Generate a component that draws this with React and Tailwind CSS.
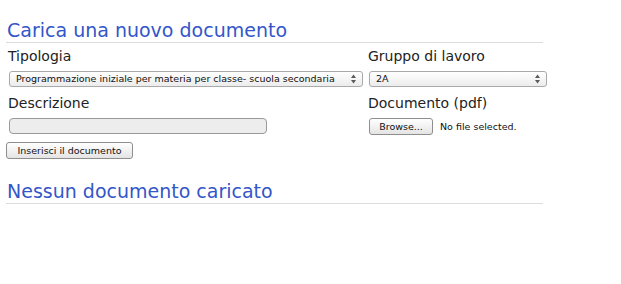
import React from 'react';

function Arrows() {
  return (
    <svg width="7" height="12" viewBox="0 0 7 12" className="shrink-0">
      <path d="M3.5 1.5 L6 5 L1 5 Z" fill="#5a5a5a" />
      <path d="M3.5 10.5 L6 7 L1 7 Z" fill="#5a5a5a" />
    </svg>
  );
}

function FakeSelect({ value, width }) {
  return (
    <div
      className={`${width} h-[16px] flex items-center justify-between pl-[6px] pr-[5px] border border-[#a9a9a9] rounded-[3px] bg-gradient-to-b from-white to-[#ececec] text-[9.5px] leading-none text-[#111]`}
    >
      <span className="whitespace-nowrap">{value}</span>
      <Arrows />
    </div>
  );
}

function Btn({ children, width }) {
  return (
    <div
      className={`${width} h-[17px] flex items-center justify-center border border-[#8e8e8e] rounded-[3px] bg-gradient-to-b from-white to-[#e4e4e4] text-[9.5px] leading-none text-[#111]`}
    >
      {children}
    </div>
  );
}

export default function App() {
  return (
    <div className="w-[621px] h-[284px] bg-white font-['DejaVu_Sans',sans-serif] text-[#222]">
      <div className="pl-[6px] pt-[19px] w-[543px]">
        <h2 className="text-[19px] leading-[23px] text-[#3356c9] border-b border-[#dcdcdc] pl-[1px]">
          Carica una nuovo documento
        </h2>

        <div className="grid grid-cols-[362px_1fr] mt-[4px]">
          {/* colonna sinistra */}
          <div className="flex flex-col pl-[2px]">
            <div className="text-[14px] leading-[18px]">Tipologia</div>
            <div className="mt-[6px] pl-[1px]">
              <FakeSelect
                width="w-[354px]"
                value="Programmazione iniziale per materia per classe- scuola secondaria"
              />
            </div>
            <div className="text-[14px] leading-[18px] mt-[7px]">Descrizione</div>
            <div className="mt-[6px] pl-[1px]">
              <div className="w-[258px] h-[16px] border border-[#9a9a9a] rounded-[4px] bg-[#ededed]"></div>
            </div>
            <div className="mt-[8px] -ml-[2px]">
              <Btn width="w-[127px]">Inserisci il documento</Btn>
            </div>
          </div>

          {/* colonna destra */}
          <div className="flex flex-col">
            <div className="text-[14px] leading-[18px]">Gruppo di lavoro</div>
            <div className="mt-[6px] pl-[1px]">
              <FakeSelect width="w-[178px]" value="2A" />
            </div>
            <div className="text-[14px] leading-[18px] mt-[7px]">Documento (pdf)</div>
            <div className="mt-[6px] pl-[1px] flex items-center gap-[7px]">
              <Btn width="w-[64px]">Browse...</Btn>
              <span className="text-[9.5px] leading-none text-[#111]">No file selected.</span>
            </div>
          </div>
        </div>

        <h2 className="mt-[21px] text-[19px] leading-[23px] text-[#3356c9] border-b border-[#dcdcdc] pl-[1px]">
          Nessun documento caricato
        </h2>
      </div>
    </div>
  );
}
